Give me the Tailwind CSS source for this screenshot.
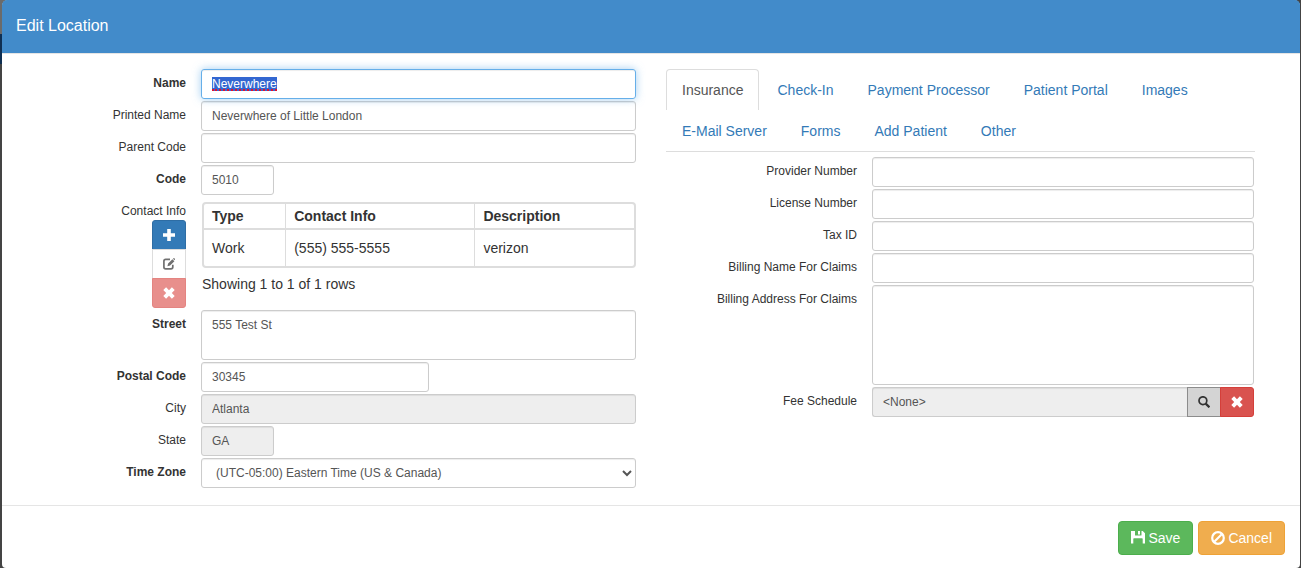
<!DOCTYPE html>
<html lang="en">
<head>
    <meta charset="UTF-8">
    <meta name="viewport" content="width=device-width, initial-scale=1.0">
    <title>Edit Location</title>
    <script src="https://cdn.jsdelivr.net/npm/@tailwindcss/browser@4"></script>
</head>
<body class="min-h-screen bg-[#444] bg-[linear-gradient(to_bottom,#6b6b6b_34px,#0f2f52_34px,#0f2f52_64px,#444_64px)] bg-[length:8px_100%] bg-no-repeat pl-[2px] pr-px font-['Liberation_Sans',Arial,sans-serif] text-xs leading-[17px] text-[#333]">
    <!-- Edit Location dialog -->
    <div role="dialog" aria-labelledby="dialog-title" class="min-h-screen rounded-t-md rounded-b-sm bg-white">
        <!-- Header -->
        <header class="rounded-t-[5px] border-b border-[#e5e5e5] bg-[#428bca] px-[14px] pt-[14px] pb-[16px]">
            <h4 id="dialog-title" class="text-base leading-[23px] text-white">Edit Location</h4>
        </header>

        <form>
            <div class="grid grid-cols-2 px-[15px] pt-[15px] pb-[17px]">
                <!-- Location details -->
                <div class="flex flex-col gap-[2px] px-[15px]">
                    <div class="grid grid-cols-[169px_1fr]">
                        <label for="name" class="pt-[6px] pr-[15px] text-right font-bold">Name</label>
                        <div class="relative">
                            <input type="text" id="name" value="Neverwhere" spellcheck="false" class="h-[30px] w-full rounded-[3px] border border-[#66afe9] px-[10px] text-[#555] shadow-[inset_0_1px_1px_rgba(0,0,0,0.075),0_0_8px_rgba(102,175,233,0.6)] outline-none selection:bg-[#3367d1] selection:text-white">
                            <!-- Spelling mark -->
                            <span class="pointer-events-none absolute bottom-2 left-[11px] w-[65px] border-b-2 border-dotted border-[#e01030]"></span>
                        </div>
                    </div>
                    <div class="grid grid-cols-[169px_1fr]">
                        <label for="printed-name" class="pt-[6px] pr-[15px] text-right">Printed Name</label>
                        <input type="text" id="printed-name" value="Neverwhere of Little London" class="h-[30px] w-full rounded-[3px] border border-[#ccc] px-[10px] text-[#555] shadow-[inset_0_1px_1px_rgba(0,0,0,0.075)]">
                    </div>
                    <div class="grid grid-cols-[169px_1fr]">
                        <label for="parent-code" class="pt-[6px] pr-[15px] text-right">Parent Code</label>
                        <input type="text" id="parent-code" class="h-[30px] w-full rounded-[3px] border border-[#ccc] px-[10px] text-[#555] shadow-[inset_0_1px_1px_rgba(0,0,0,0.075)]">
                    </div>
                    <div class="grid grid-cols-[169px_1fr]">
                        <label for="code" class="pt-[6px] pr-[15px] text-right font-bold">Code</label>
                        <input type="text" id="code" value="5010" class="h-[30px] w-[73px] rounded-[3px] border border-[#ccc] px-[10px] text-[#555] shadow-[inset_0_1px_1px_rgba(0,0,0,0.075)]">
                    </div>

                    <!-- Contact info table and its buttons -->
                    <div class="grid grid-cols-[169px_1fr]">
                        <div class="flex flex-col items-end pt-[6px] pr-[15px]">
                            <span id="contact-label">Contact Info</span>
                            <div class="flex w-[34px] flex-col">
                                <button type="button" aria-label="Add contact" class="flex h-[30px] items-center justify-center rounded-t-[3px] border border-[#2e6da4] bg-[#337ab7] text-white">
                                    <svg class="size-3" viewBox="0 0 12 12" fill="currentColor"><path d="M4.2 0h3.6v4.2H12v3.6H7.8V12H4.2V7.8H0V4.2h4.2z"/></svg>
                                </button>
                                <button type="button" aria-label="Edit contact" class="-mt-px flex h-[30px] items-center justify-center border border-[#ddd] bg-white text-[#707070]">
                                    <svg class="size-3" viewBox="0 0 12 12" fill="none" stroke="currentColor"><path stroke-width="1.7" d="M7 1.4H2.7Q.9 1.4.9 3.2V9Q.9 10.8 2.7 10.8H8Q9.8 10.8 9.8 9V6.8"/><path fill="currentColor" stroke="none" d="M4.4 8.2l.7-2.7 4.3-4.3 2 2-4.3 4.3zM9.9.8l.5-.5h1l.5.5v1l-.4.5z"/></svg>
                                </button>
                                <button type="button" aria-label="Remove contact" class="-mt-px flex h-[30px] items-center justify-center rounded-b-[3px] border border-[#e48481] bg-[#e88f8c] text-white">
                                    <svg class="size-3" viewBox="0 0 12 12" fill="currentColor"><path d="M3.1.3L6 3.2 8.9.3l2.8 2.8L8.8 6l2.9 2.9-2.8 2.8L6 8.8l-2.9 2.9L.3 8.9 3.2 6 .3 3.1z"/></svg>
                                </button>
                            </div>
                        </div>
                        <div class="pt-[5px] pl-px text-sm leading-5">
                            <div class="overflow-hidden rounded border-2 border-[#ddd]">
                                <table aria-labelledby="contact-label" class="w-full table-fixed text-left">
                                    <thead>
                                        <tr class="h-[25px] border-b-2 border-[#ddd]">
                                            <th class="w-[19%] border-r border-[#ddd] px-2">Type</th>
                                            <th class="w-[44%] border-r border-[#ddd] px-2">Contact Info</th>
                                            <th class="px-2">Description</th>
                                        </tr>
                                    </thead>
                                    <tbody>
                                        <tr class="h-[37px]">
                                            <td class="border-r border-[#ddd] px-2">Work</td>
                                            <td class="border-r border-[#ddd] px-2">(555) 555-5555</td>
                                            <td class="px-2">verizon</td>
                                        </tr>
                                    </tbody>
                                </table>
                            </div>
                            <p class="pt-[6px]">Showing 1 to 1 of 1 rows</p>
                        </div>
                    </div>

                    <!-- Address -->
                    <div class="grid grid-cols-[169px_1fr]">
                        <label for="street" class="pt-[6px] pr-[15px] text-right font-bold">Street</label>
                        <textarea id="street" class="h-[50px] w-full resize-none rounded-[3px] border border-[#ccc] px-[10px] py-[6px] text-[#555] shadow-[inset_0_1px_1px_rgba(0,0,0,0.075)]">555 Test St</textarea>
                    </div>
                    <div class="grid grid-cols-[169px_1fr]">
                        <label for="postal-code" class="pt-[6px] pr-[15px] text-right font-bold">Postal Code</label>
                        <input type="text" id="postal-code" value="30345" class="h-[30px] w-[228px] rounded-[3px] border border-[#ccc] px-[10px] text-[#555] shadow-[inset_0_1px_1px_rgba(0,0,0,0.075)]">
                    </div>
                    <div class="grid grid-cols-[169px_1fr]">
                        <label for="city" class="pt-[6px] pr-[15px] text-right">City</label>
                        <input type="text" id="city" value="Atlanta" readonly class="h-[30px] w-full rounded-[3px] border border-[#ccc] bg-[#eee] px-[10px] text-[#555] shadow-[inset_0_1px_1px_rgba(0,0,0,0.075)]">
                    </div>
                    <div class="grid grid-cols-[169px_1fr]">
                        <label for="state" class="pt-[6px] pr-[15px] text-right">State</label>
                        <input type="text" id="state" value="GA" readonly class="h-[30px] w-[73px] rounded-[3px] border border-[#ccc] bg-[#eee] px-[10px] text-[#555] shadow-[inset_0_1px_1px_rgba(0,0,0,0.075)]">
                    </div>
                    <div class="grid grid-cols-[169px_1fr]">
                        <label for="time-zone" class="pt-[6px] pr-[15px] text-right font-bold">Time Zone</label>
                        <select id="time-zone" class="h-[30px] w-full rounded-[3px] border border-[#ccc] bg-white pl-[10px] text-[#555] shadow-[inset_0_1px_1px_rgba(0,0,0,0.075)]">
                            <option>(UTC-05:00) Eastern Time (US &amp; Canada)</option>
                        </select>
                    </div>
                </div>

                <!-- Settings tabs -->
                <div class="pr-[30px] pl-[15px]">
                    <nav class="flex flex-wrap gap-x-[2px] border-b border-[#ddd] text-sm leading-5 text-[#337ab7]">
                        <a href="#insurance" class="h-[41px] rounded-t border border-b-0 border-[#ddd] px-[15px] py-[10px] text-[#555]">Insurance</a>
                        <a href="#check-in" class="h-[41px] border border-transparent px-[15px] py-[10px]">Check-In</a>
                        <a href="#payment-processor" class="h-[41px] border border-transparent px-[15px] py-[10px]">Payment Processor</a>
                        <a href="#patient-portal" class="h-[41px] border border-transparent px-[15px] py-[10px]">Patient Portal</a>
                        <a href="#images" class="h-[41px] border border-transparent px-[15px] py-[10px]">Images</a>
                        <a href="#email-server" class="h-[41px] border border-transparent px-[15px] py-[10px]">E-Mail Server</a>
                        <a href="#forms" class="h-[41px] border border-transparent px-[15px] py-[10px]">Forms</a>
                        <a href="#add-patient" class="h-[41px] border border-transparent px-[15px] py-[10px]">Add Patient</a>
                        <a href="#other" class="h-[41px] border border-transparent px-[15px] py-[10px]">Other</a>
                    </nav>

                    <div id="insurance" class="flex flex-col gap-[2px] pt-[5px] pr-px">
                        <div class="grid grid-cols-[206px_1fr]">
                            <label for="provider-number" class="pt-[6px] pr-[15px] text-right">Provider Number</label>
                            <input type="text" id="provider-number" class="h-[30px] w-full rounded-[3px] border border-[#ccc] px-[10px] text-[#555] shadow-[inset_0_1px_1px_rgba(0,0,0,0.075)]">
                        </div>
                        <div class="grid grid-cols-[206px_1fr]">
                            <label for="license-number" class="pt-[6px] pr-[15px] text-right">License Number</label>
                            <input type="text" id="license-number" class="h-[30px] w-full rounded-[3px] border border-[#ccc] px-[10px] text-[#555] shadow-[inset_0_1px_1px_rgba(0,0,0,0.075)]">
                        </div>
                        <div class="grid grid-cols-[206px_1fr]">
                            <label for="tax-id" class="pt-[6px] pr-[15px] text-right">Tax ID</label>
                            <input type="text" id="tax-id" class="h-[30px] w-full rounded-[3px] border border-[#ccc] px-[10px] text-[#555] shadow-[inset_0_1px_1px_rgba(0,0,0,0.075)]">
                        </div>
                        <div class="grid grid-cols-[206px_1fr]">
                            <label for="billing-name" class="pt-[6px] pr-[15px] text-right">Billing Name For Claims</label>
                            <input type="text" id="billing-name" class="h-[30px] w-full rounded-[3px] border border-[#ccc] px-[10px] text-[#555] shadow-[inset_0_1px_1px_rgba(0,0,0,0.075)]">
                        </div>
                        <div class="grid grid-cols-[206px_1fr]">
                            <label for="billing-address" class="pt-[6px] pr-[15px] text-right">Billing Address For Claims</label>
                            <textarea id="billing-address" class="h-[100px] w-full resize-none rounded-[3px] border border-[#ccc] px-[10px] py-[6px] text-[#555] shadow-[inset_0_1px_1px_rgba(0,0,0,0.075)]"></textarea>
                        </div>
                        <div class="grid grid-cols-[206px_1fr]">
                            <label for="fee-schedule" class="pt-[6px] pr-[15px] text-right">Fee Schedule</label>
                            <div class="flex">
                                <input type="text" id="fee-schedule" value="&lt;None&gt;" readonly class="h-[30px] min-w-0 flex-1 rounded-l-[3px] border border-r-0 border-[#ccc] bg-[#eee] px-[10px] text-[#555] shadow-[inset_0_1px_1px_rgba(0,0,0,0.075)]">
                                <button type="button" aria-label="Find fee schedule" class="flex h-[30px] w-[34px] items-center justify-center border border-[#8c8c8c] bg-[#d4d4d4] text-[#333]">
                                    <svg class="size-3" viewBox="0 0 12 12" fill="none" stroke="currentColor"><circle cx="4.9" cy="4.7" r="3.9" stroke-width="1.7"/><path stroke-width="2.2" d="M7.7 7.6l3.7 3.7"/></svg>
                                </button>
                                <button type="button" aria-label="Clear fee schedule" class="-ml-px flex h-[30px] w-[34px] items-center justify-center rounded-r-[3px] border border-[#d43f3a] bg-[#d9534f] text-white">
                                    <svg class="size-3" viewBox="0 0 12 12" fill="currentColor"><path d="M3.1.3L6 3.2 8.9.3l2.8 2.8L8.8 6l2.9 2.9-2.8 2.8L6 8.8l-2.9 2.9L.3 8.9 3.2 6 .3 3.1z"/></svg>
                                </button>
                            </div>
                        </div>
                    </div>
                </div>
            </div>

            <!-- Footer -->
            <footer class="flex justify-end gap-[5px] border-t border-[#e5e5e5] px-[15px] pt-[15px] text-sm leading-5 text-white">
                <button type="submit" class="flex h-[34px] items-center gap-[3px] rounded border border-[#4cae4c] bg-[#5cb85c] px-3">
                    <svg class="size-[14px]" viewBox="0 0 14 14" fill="currentColor"><path fill-rule="evenodd" d="M0 0h4v4q0 .5.5.5h5.5q.5 0 .5-.5V0h1.2L14 2.3V12.5h-2.3V8q0-.7-.7-.7H3q-.7 0-.7.7v4.5H0zM7 0h2v3.4H7z"/></svg>
                    Save
                </button>
                <button type="button" class="flex h-[34px] items-center gap-[3px] rounded border border-[#eea236] bg-[#f0ad4e] px-3">
                    <svg class="size-[14px]" viewBox="0 0 14 14" fill="none" stroke="currentColor" stroke-width="2.2"><circle cx="7" cy="7" r="5.8"/><path d="M3 11l8-8"/></svg>
                    Cancel
                </button>
            </footer>
        </form>
    </div>

    <script>
        // Open with the name ready to be typed over
        const nameInput = document.getElementById('name');
        nameInput.focus();
        nameInput.select();
    </script>
</body>
</html>
